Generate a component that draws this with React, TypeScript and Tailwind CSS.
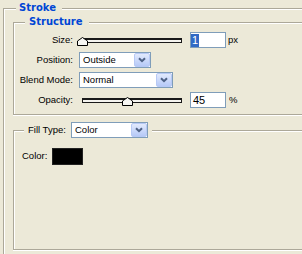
import React from "react";

// etched XP group box line: gray line with a white line just after it
const etched =
  "border border-r-0 border-[#ACA899] shadow-[inset_1px_1px_0_#fff,0_1px_0_#fff]";

function Chevron() {
  return (
    <svg width="8" height="6" viewBox="0 0 8 6">
      <path d="M1 1.2 L4 4.2 L7 1.2" fill="none" stroke="#4D6185" strokeWidth="2" />
    </svg>
  );
}

function Select({ value, width }: { value: string; width: string }) {
  return (
    <div className={`flex items-center h-[16px] border border-[#7F9DB9] bg-white ${width}`}>
      <span className="flex-1 pl-[3px] leading-[14px] text-black">{value}</span>
      <div className="w-[16px] h-full flex items-center justify-center rounded-[2px] border border-[#B7C9F5] bg-linear-to-b from-[#E2EAFD] to-[#B6C9F7]">
        <Chevron />
      </div>
    </div>
  );
}

function Thumb({ left }: { left: number }) {
  return (
    <svg
      width="11"
      height="9"
      viewBox="0 0 11 9"
      className="absolute top-[5px]"
      style={{ left }}
    >
      <polygon
        points="0.5,8.5 0.5,4 5.5,0.5 10.5,4 10.5,8.5"
        fill="#F7F7F3"
        stroke="#000"
        strokeWidth="1"
      />
    </svg>
  );
}

function Slider({ pct }: { pct: number }) {
  return (
    <div className="relative ml-[4px] w-[110px] h-full pl-[5px]">
      <div className="mt-[6px] w-[100px] h-[5px] border-t-2 border-x border-b border-[#1a1a1a] bg-[#F4F3EE]" />
      <Thumb left={pct} />
    </div>
  );
}

function NumBox({ children }: { children: React.ReactNode }) {
  return (
    <div className="ml-[3px] w-[36px] h-[16px] border border-[#7F9DB9] bg-white flex items-center text-[11px]">
      {children}
    </div>
  );
}

function Label({ text }: { text: string }) {
  return <span className="w-[59px] shrink-0 text-right leading-[16px]">{text}</span>;
}

export default function App() {
  return (
    <div className="w-[302px] h-[254px] overflow-hidden bg-[#ECE9D8] pt-[8px] pl-[3px] font-['Liberation_Sans',Arial,sans-serif] text-[9.5px] text-black">
      <div className="relative w-[340px] h-[270px] border-l border-t border-[#ACA899] shadow-[inset_1px_1px_0_#fff] pl-[9px] pt-[13px]">
        <span className="absolute left-[12px] top-[-7px] h-[12px] leading-[12px] pl-[3px] pr-[6px] bg-[#ECE9D8] font-['DejaVu_Sans',sans-serif] font-bold text-[10px] text-[#0046D5]">
          Stroke
        </span>

        {/* Structure */}
        <div className={`relative w-[320px] h-[93px] ${etched} pt-[9px]`}>
          <span className="absolute left-[11px] top-[-7px] h-[12px] leading-[12px] pl-[4px] pr-[6px] bg-[#ECE9D8] font-['DejaVu_Sans',sans-serif] font-bold text-[10px] text-[#0046D5]">
            Structure
          </span>

          <div className="flex flex-col gap-[4px]">
            <div className="flex items-center h-[16px]">
              <Label text="Size:" />
              <Slider pct={0} />
              <NumBox>
                <span className="h-[13px] leading-[13px] bg-[#316AC5] text-white px-[1px]">1</span>
              </NumBox>
              <span className="ml-[2px]">px</span>
            </div>

            <div className="flex items-center h-[16px]">
              <Label text="Position:" />
              <div className="ml-[6px]">
                <Select value="Outside" width="w-[72px]" />
              </div>
            </div>

            <div className="flex items-center h-[16px]">
              <Label text="Blend Mode:" />
              <div className="ml-[6px]">
                <Select value="Normal" width="w-[94px]" />
              </div>
            </div>

            <div className="flex items-center h-[16px]">
              <Label text="Opacity:" />
              <Slider pct={45} />
              <NumBox>
                <span className="pl-[2px] leading-[13px]">45</span>
              </NumBox>
              <span className="ml-[3px] self-start mt-[1px]">%</span>
            </div>
          </div>
        </div>

        {/* Fill Type */}
        <div className={`relative mt-[15px] w-[320px] h-[120px] ${etched} pt-[17px] pl-[8px]`}>
          <div className="absolute left-[10px] top-[-9px] flex items-center pl-[4px] pr-[4px] bg-[#ECE9D8]">
            <span className="w-[43px] leading-[16px]">Fill Type:</span>
            <Select value="Color" width="w-[77px]" />
          </div>

          <div className="flex items-center h-[17px]">
            <span className="w-[30px]">Color:</span>
            <div className="w-[31px] h-[17px] bg-black border border-[#222]" />
          </div>
        </div>
      </div>
    </div>
  );
}
